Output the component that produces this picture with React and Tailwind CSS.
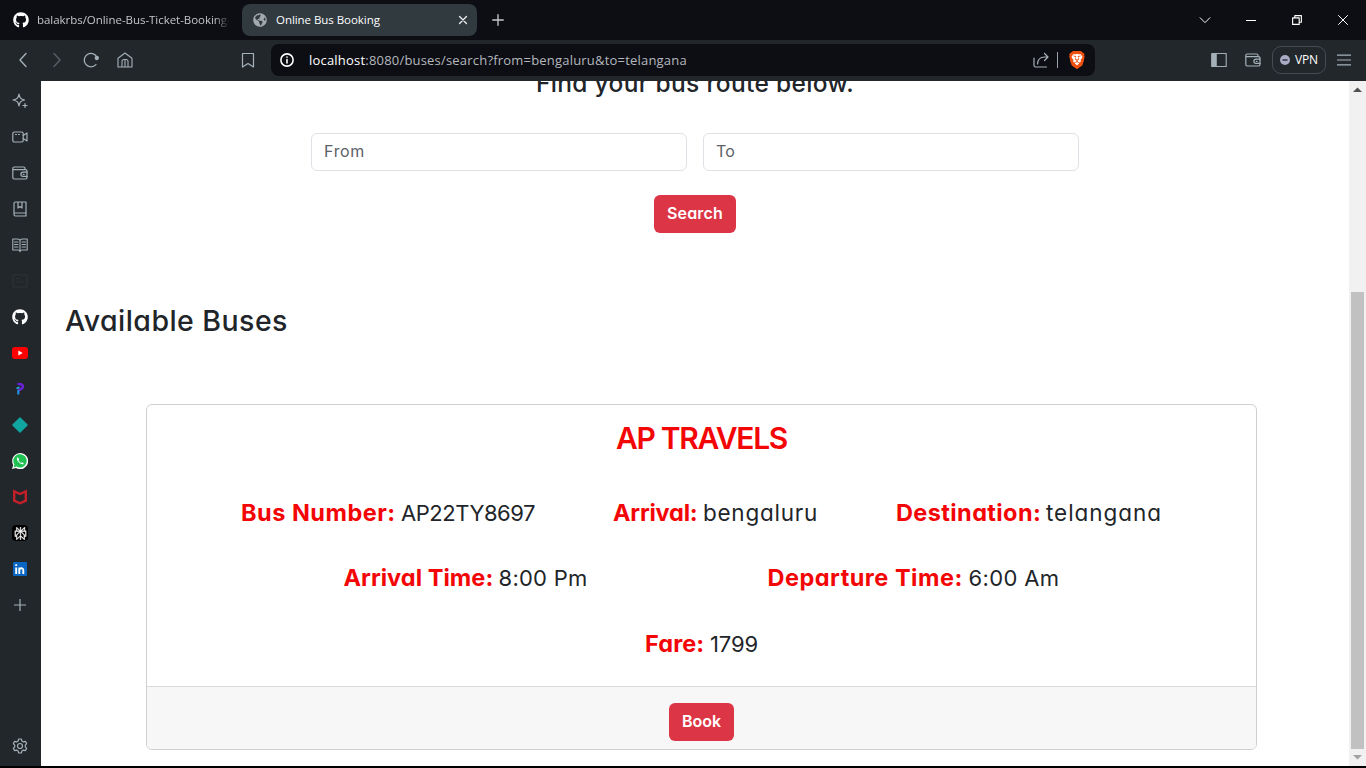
import { FaGithub, FaGlobeAmericas } from "react-icons/fa";
import { SiBrave, SiPerplexity } from "react-icons/si";

function Line({ size = 16, sw = 1, className = "", children }) {
  return (
    <svg width={size} height={size} viewBox="0 0 16 16" fill="none" stroke="currentColor" strokeWidth={sw} strokeLinecap="round" strokeLinejoin="round" className={`block shrink-0 ${className}`}>
      {children}
    </svg>
  );
}

const Wallet = () => (
  <Line sw={1.2}>
    <path d="M13 4.5V3.4A1.4 1.4 0 0 0 11.6 2H2.2A1.4 1.4 0 0 0 .8 3.4v9.2A1.4 1.4 0 0 0 2.2 14h11.4a1.4 1.4 0 0 0 1.4-1.4V6a1.4 1.4 0 0 0-1.4-1.4H1.5" />
    <path d="M15 7.2h-4a2.1 2.1 0 0 0 0 4.2h4M11.3 9.3h.8" />
  </Line>
);

function Tabs() {
  return (
    <div className="flex h-10 items-center bg-[#0d0e13]">
      <div className="flex h-8 w-[242px] items-center pl-[13px]">
        <FaGithub size={16} className="shrink-0 text-white" />
        <span className="ml-2 block w-[193px] whitespace-nowrap text-[11.5px] leading-4 tracking-[-0.04px] text-[#c3c5c8] [mask-image:linear-gradient(to_right,black_92%,transparent)]">
          balakrbs/Online-Bus-Ticket-Booking-
        </span>
      </div>
      <div className="flex h-8 w-[235px] items-center rounded-lg bg-[#303a3f] pl-[11px] pr-[9px]">
        <FaGlobeAmericas size={14} className="shrink-0 text-[#a3a9b0]" />
        <span className="ml-[9px] whitespace-nowrap text-[11.5px] leading-4 tracking-[-0.05px] text-white">Online Bus Booking</span>
        <Line size={10} sw={2.2} className="ml-auto text-[#e8eaec]"><path d="m2.5 2.500 11 11m0-11-11 11" /></Line>
      </div>
      <Line size={12} sw={1.8} className="ml-[15px] text-[#c4c7cb]"><path d="M8 1v14M1 8h14" /></Line>
      <div className="ml-auto flex items-center text-white">
        <Line size={12} sw={1.3} className="mr-[35px]"><path d="m1.500 5 6.500 6.500 6.500-6.500" /></Line>
        <div className="mr-9 h-px w-2.5 bg-white" />
        <Line size={10} sw={1.8} className="mr-9"><path d="M1 4.500h10.500V15H1zM4.500 4V1H15v10.500h-3" /></Line>
        <Line size={10} sw={1.6} className="mr-[18px]"><path d="m.8.8 14.400 14.400m0-14.400L.8 15.200" /></Line>
      </div>
    </div>
  );
}

function Toolbar() {
  return (
    <div className="flex h-[41px] items-center bg-[#22272b] pb-px text-[#a4b1b8]">
      <Line className="ml-[15px]" sw={1.4}><path d="M11 1.500 5 8l6 6.500" /></Line>
      <Line className="ml-[18px] text-[#566066]" sw={1.4}><path d="m5 1.500 6 6.500-6 6.500" /></Line>
      <Line className="ml-[18px]" sw={1.3}><path d="M12.900 12.600A6.700 6.700 0 1 1 14 5.200" /><circle cx="13.800" cy="6" r="1.500" fill="currentColor" /></Line>
      <Line className="ml-[18px]" sw={1.1}><path d="M1 6.200 8 1l7 5.200V15h-4V9.500a2 2 0 0 0-2-2H7a2 2 0 0 0-2 2V15H1zM8 8v7M5 15h6" /></Line>
      <Line className="ml-[107px]" sw={1.2}><path d="M2.500 1.500h11V15L8 11.500 2.500 15z" /></Line>
      <div className="ml-[15px] flex h-8 w-[824px] items-center rounded-lg bg-[#0d0e13] px-[9px]">
        <Line size={14} sw={1.8} className="text-white"><circle cx="8" cy="8" r="7" /><path d="M8 7.500v3.800M8 4.600v.2" /></Line>
        <span className="ml-[15px] whitespace-nowrap text-[13px] leading-4 tracking-[0.2px] text-[#b4b8be]">
          <span className="text-white">localhost</span>:8080/buses/search?from=bengaluru&amp;to=telangana
        </span>
        <Line className="ml-auto text-[#a7b0b6]" sw={1.2}><path d="M1 6v7.500A1.500 1.500 0 0 0 2.500 15h11M4.500 12c.3-4.500 2.500-7 7-7H15M11.500 1.500 15 5l-3.500 3.500" /></Line>
        <div className="ml-2 h-4 w-px bg-[#9ba3a9]" />
        <div className="ml-2.5 grid size-[18px] place-items-center text-[#f0500f]">
          <svg viewBox="0 0 18 18" className="col-start-1 row-start-1 size-[18px]"><path d="M5 0h8l3 3-.5 8L9 18 2.500 11 1.500 3z" fill="#f0500f" /><path d="M5.500 3h7l2 2.500-1.500 5L9 15l-4-4.500-1.500-5z" fill="#fff" /></svg>
          <SiBrave size={18} className="col-start-1 row-start-1" />
        </div>
      </div>
      <Line className="ml-[116px]" sw={1.1}><path d="M.8 1.500h14.400v13H.8zM5 1.500v13" /><path d="M1 2h4v12H1z" fill="currentColor" /></Line>
      <div className="ml-[18px]"><Wallet /></div>
      <div className="ml-[11px] flex h-7 w-[54px] items-center rounded-[9px] border border-[#454c51] pl-[7px]">
        <svg width="10" height="10" viewBox="0 0 10 10" className="shrink-0"><circle cx="5" cy="5" r="5" fill="#a9aac3" /><path d="M2.500 5h5" stroke="#333a4a" strokeWidth="1.600" /></svg>
        <span className="ml-[5px] text-[12px] font-medium leading-4 tracking-[-0.2px] text-white">VPN</span>
      </div>
      <Line size={14} sw={1.3} className="ml-[11px]"><path d="M0 2.500h16M0 8h16M0 13.500h16" /></Line>
    </div>
  );
}

const sideIcons = [
  <Line sw={1.2}><path d="M7 1c.6 3.800 1.700 5 5.500 6C8.700 8 7.600 9.200 7 13 6.400 9.200 5.300 8 1 7c4.300-1 5.400-2.200 6-6zM13 10.500v4M11 12.500h4" /></Line>,
  <Line sw={1.2}><rect x=".8" y="3" width="10.400" height="10" rx="1.500" /><path d="m11.200 6.500 3.800-2.500v8l-3.800-2.500M3.500 5.500h1M6.500 5.500h1" /></Line>,
  <Wallet />,
  <Line sw={1.2}><path d="M14 1H3.500A1.500 1.500 0 0 0 2 2.500v11A1.500 1.500 0 0 0 3.500 15H14zM2.200 12H14M6 1v6l2-1.500L10 7V1" /></Line>,
  <Line sw={1.1}><path d="M8 3.200v11.500M8 3.200C7.500 2.400 6.500 2 5 2H.8v11H6c1 0 1.700.5 2 1.200.3-.7 1-1.200 2-1.200h5.200V2H11c-1.500 0-2.500.4-3 1.200zM2.500 5h3.500M2.500 7.500h3.500M2.500 10h3.500M10 5h3.500M10 7.500h3.500M10 10h3.500" /></Line>,
  <Line sw={1.1} className="text-[#2d3337]"><path d="M1 2h14v12H1zM4 5.500h3M4 9h8" /></Line>,
  <FaGithub size={16} className="text-white" />,
  <svg width="16" height="12" viewBox="0 0 16 12"><rect width="16" height="12" rx="3" fill="#f00" /><path d="m6.300 3.500 4.400 2.500-4.400 2.500z" fill="#fff" /></svg>,
  <svg width="10" height="14" viewBox="0 0 10 14" fill="none"><path d="M2.500 2.200C5.500 1.500 8.300 2.600 7.800 5S5.500 7 3.500 8.500" stroke="#6a22d6" strokeWidth="2.600" /><path d="M4.500 5.200 1.500 6.500" stroke="#25b4e5" strokeWidth="1.600" /><path d="M3.300 8v4.500" stroke="#2790df" strokeWidth="2.200" /></svg>,
  <svg width="16" height="16" viewBox="0 0 16 16"><path d="m8 1 7 7-7 7-7-7z" fill="#10a5a0" stroke="#10a5a0" strokeLinejoin="round" strokeWidth="1.500" /></svg>,
  <svg width="16" height="16" viewBox="0 0 16 16"><path d="m0 16 1.200-4A8 8 0 1 1 4 14.900z" fill="#fff" /><path d="m1.600 14.400.8-2.900A6.700 6.700 0 1 1 4.600 13.600z" fill="#20c152" /><path d="M5.800 4.300c-1.600.8-1 3 1 5s4.200 2.700 5 1.100l-1.700-1.200-1 .8C8 9.500 7 8.500 6.500 7.300l.7-.9z" fill="#fff" /></svg>,
  <Line sw={2.4} className="text-[#c4202b]"><path strokeLinejoin="miter" strokeLinecap="butt" d="M2.200 2.300 8 5l5.800-2.700v9.400L8 14.300l-5.800-2.600z" /></Line>,
  <span className="grid size-4 place-items-center rounded-sm bg-black text-white"><SiPerplexity size={13} stroke="currentColor" strokeWidth={0.8} /></span>,
  <span className="flex size-3.5 items-center justify-center rounded-[1px] bg-[#0a66c2]"><svg width="10" height="10" viewBox="0 0 10 10" fill="none" stroke="#fff" strokeWidth="1.900"><path d="M1.200 3.500V10M1.200.2v1.900M4.300 10V3.500M4.300 10V6c0-2.200 4-2.400 4 0v4" /></svg></span>,
  <Line size={12} sw={1.6}><path d="M8 0v16M0 8h16" /></Line>,
];

function Sidebar() {
  return (
    <div className="flex w-[41px] shrink-0 flex-col bg-[#22272b] pt-0.5 text-[#a4b1b8]">
      {sideIcons.map((icon, i) => (
        <div key={i} className="flex h-9 w-10 items-center justify-center">{icon}</div>
      ))}
      <div className="mb-0.5 mt-auto flex h-9 w-10 items-center justify-center">
        <Line sw={1.2}><circle cx="8" cy="8" r="2.500" /><path d="M6.700 1h2.600l.6 2 1.500.9 2-.5 1.300 2.300L13.300 7.200v1.600l1.400 1.500-1.300 2.300-2-.5-1.500.9-.6 2H6.700l-.6-2-1.500-.9-2 .5-1.300-2.300 1.400-1.500V7.200L1.300 5.700l1.300-2.300 2 .5 1.500-.9z" /></Line>
      </div>
    </div>
  );
}

function Field({ label, labelClass = "", value, valueClass = "text-[22px]", box }) {
  return (
    <p className={`flex items-baseline justify-between whitespace-nowrap ${box}`}>
      <span className={`text-[23.5px] font-bold text-[#f30606] ${labelClass}`}>{label}</span>
      <span className={valueClass}>{value}</span>
    </p>
  );
}

const button = "flex h-[38px] items-center justify-center rounded-md bg-[#dc3545] pb-0.5 text-[16px] font-semibold text-white";
const field = "flex h-[38px] w-[376px] items-center rounded-md border border-[#dee2e6] pb-0.5 pl-3";

function Page() {
  return (
    <main className="min-w-0 flex-1 overflow-hidden bg-white font-['Inter',sans-serif] text-[#212529] [font-feature-settings:'cv11'_1]">
      <h4 className="-mt-[14px] h-8 text-center text-[24.5px] font-[450] leading-8 tracking-[0.34px]">Find your bus route below.</h4>
      <form className="mt-[34px] flex flex-col items-center">
        <div className="flex gap-4 text-[16px] leading-6 text-[#5c6167]">
          <div className={field}><span className="tracking-[0.66px]">From</span></div>
          <div className={field}><span className="tracking-[0.16px]">To</span></div>
        </div>
        <button type="button" className={`mt-6 w-[82px] tracking-[0.17px] ${button}`}>Search</button>
      </form>
      <h3 className="ml-6 mt-[71px] h-[34px] text-[28.5px] font-[450] leading-[34px] tracking-[0.45px]">Available Buses</h3>
      <section className="ml-[105px] mt-[66px] flex h-[346px] w-[1111px] flex-col overflow-hidden rounded-md border border-[#cfcfd0]">
        <h2 className="mt-[15px] h-9 text-center text-[30px] font-semibold leading-9 tracking-[-1.3px] text-[#f30606]">AP TRAVELS</h2>
        <div className="mt-[41px] flex h-8 justify-center gap-[78px] leading-8">
          <Field box="w-[294px]" label="Bus Number:" labelClass="tracking-[0.5px]" value="AP22TY8697" valueClass="text-[22px] tracking-[-0.45px]" />
          <Field box="w-[205px]" label="Arrival:" labelClass="tracking-[-0.2px]" value="bengaluru" valueClass="text-[22.5px] tracking-[0.75px]" />
          <Field box="w-[266px]" label="Destination:" labelClass="tracking-[0.4px]" value="telangana" valueClass="text-[22.5px] tracking-[0.95px]" />
        </div>
        <div className="mt-[33px] flex h-8 justify-center gap-[180px] leading-8">
          <Field box="w-[244px]" label="Arrival Time:" labelClass="tracking-[0.05px]" value="8:00 Pm" valueClass="text-[22px] tracking-[0.25px]" />
          <Field box="w-[292px]" label="Departure Time:" labelClass="tracking-[0.5px]" value="6:00 Am" valueClass="text-[22px] tracking-[0.37px]" />
        </div>
        <div className="mt-[34px] flex h-8 justify-center leading-8">
          <Field box="w-[113px]" label="Fare:" labelClass="tracking-[0.1px]" value="1799" valueClass="text-[22px] tracking-[-0.12px]" />
        </div>
        <footer className="mt-auto flex h-[63px] shrink-0 items-start justify-center border-t border-[#dadadb] bg-[#f7f7f7] pt-4">
          <button type="button" className={`w-[65px] ${button}`}>Book</button>
        </footer>
      </section>
    </main>
  );
}

export default function App() {
  return (
    <div className="flex h-[768px] w-[1366px] flex-col overflow-hidden bg-black font-['Open_Sans',sans-serif]">
      <Tabs />
      <Toolbar />
      <div className="flex h-[685px]">
        <Sidebar />
        <Page />
        <div className="flex w-[17px] shrink-0 flex-col items-center bg-[#f1f1f1]">
          <svg width="17" height="17" viewBox="0 0 17 17"><path d="M4 11h9L8.500 6.500z" fill="#505050" /></svg>
          <div className="mt-[194px] h-[457px] w-[13px] bg-[#c1c1c1]" />
          <svg width="17" height="17" viewBox="0 0 17 17"><path d="M4 6h9l-4.500 4.500z" fill="#a3a3a3" /></svg>
        </div>
      </div>
    </div>
  );
}
